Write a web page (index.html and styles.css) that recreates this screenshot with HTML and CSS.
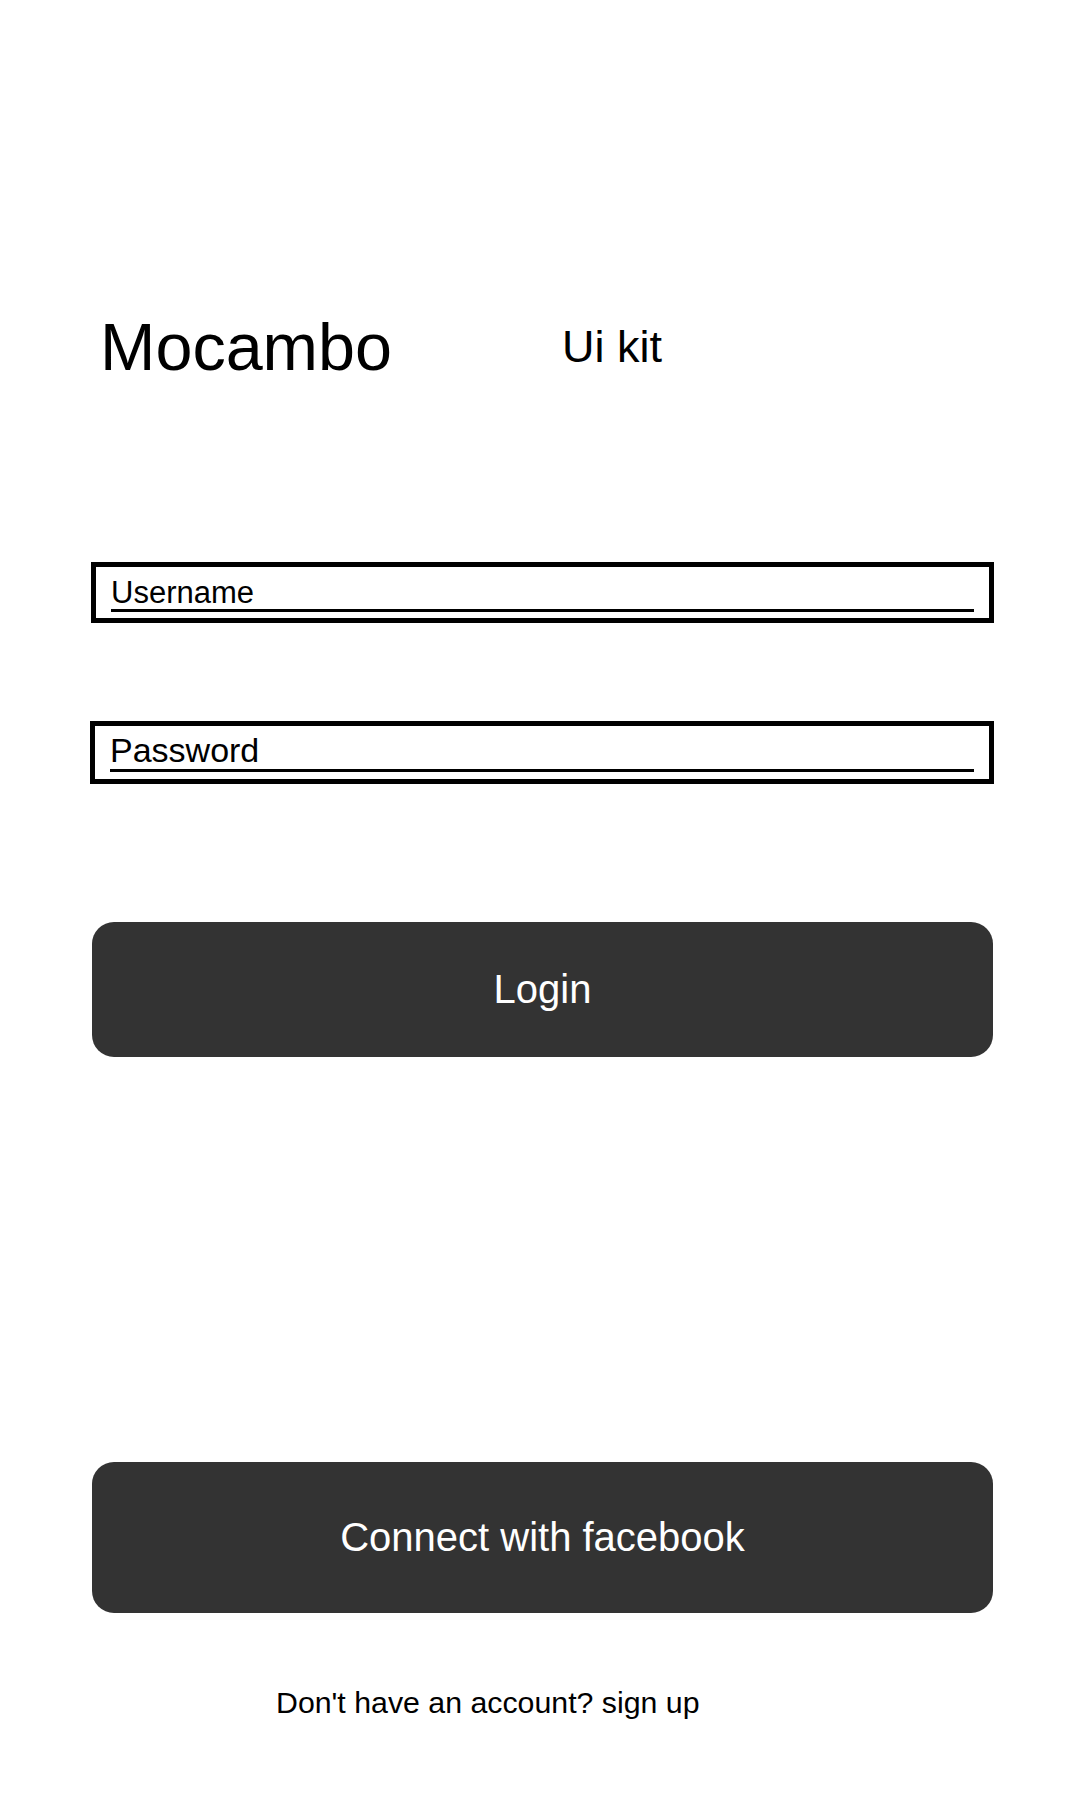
FILE: index.html
```html
<!DOCTYPE html>
<html lang="en">
<head>
<meta charset="utf-8">
<title>Mocambo Ui kit - Login</title>
<link rel="stylesheet" href="styles.css">
</head>
<body>
<main class="screen">
  <header class="brand">
    <h1 class="brand-name">Mocambo</h1>
    <span class="brand-tag">Ui kit</span>
  </header>

  <form class="login-form">
    <label class="field field-user">
      <span class="field-line">Username</span>
    </label>
    <label class="field field-pass">
      <span class="field-line">Password</span>
    </label>
    <button type="button" class="btn btn-login">Login</button>
  </form>

  <button type="button" class="btn btn-facebook">Connect with facebook</button>

  <p class="signup">Don't have an account? sign up</p>
</main>
</body>
</html>
```

FILE: styles.css
```css
* {
  box-sizing: border-box;
}

html, body {
  margin: 0;
  padding: 0;
  background: #ffffff;
}

body {
  font-family: "Liberation Sans", Arial, sans-serif;
  color: #000000;
  width: 1080px;
  min-height: 1800px;
}

.screen {
  display: flex;
  flex-direction: column;
  padding-top: 314px;
}

.brand {
  display: flex;
  align-items: flex-start;
  gap: 170px;
  padding-left: 100px;
}

.brand-name {
  margin: 0;
  font-size: 66.5px;
  line-height: 67px;
  font-weight: normal;
}

.brand-tag {
  margin-top: 10px;
  font-size: 45px;
  line-height: 45px;
}

.login-form {
  display: flex;
  flex-direction: column;
  margin: 181px 0 0 0;
}

.field {
  display: block;
  border: 5px solid #000000;
  margin: 0 86px 0 91px;
}

.field-line {
  display: block;
  border-bottom: 3px solid #000000;
}

.field-user {
  padding: 9px 15px 6px 15px;
}

.field-user .field-line {
  font-size: 31px;
  line-height: 33px;
}

.field-pass {
  margin-top: 98px;
  margin-left: 90px;
  padding: 6px 15px 7px 15px;
}

.field-pass .field-line {
  font-size: 34px;
  line-height: 37px;
}

.btn {
  display: flex;
  align-items: center;
  justify-content: center;
  border: 0;
  background: #333333;
  color: #ffffff;
  font-family: "Liberation Sans", Arial, sans-serif;
  font-size: 40px;
  border-radius: 22px;
  margin: 0 87px 0 92px;
  padding: 0;
  width: 901px;
}

.btn-login {
  margin-top: 138px;
  height: 135px;
}

.btn-facebook {
  margin-top: 405px;
  height: 151px;
}

.signup {
  margin: 75px 0 0 276px;
  font-size: 30.3px;
  line-height: 30px;
}
```
